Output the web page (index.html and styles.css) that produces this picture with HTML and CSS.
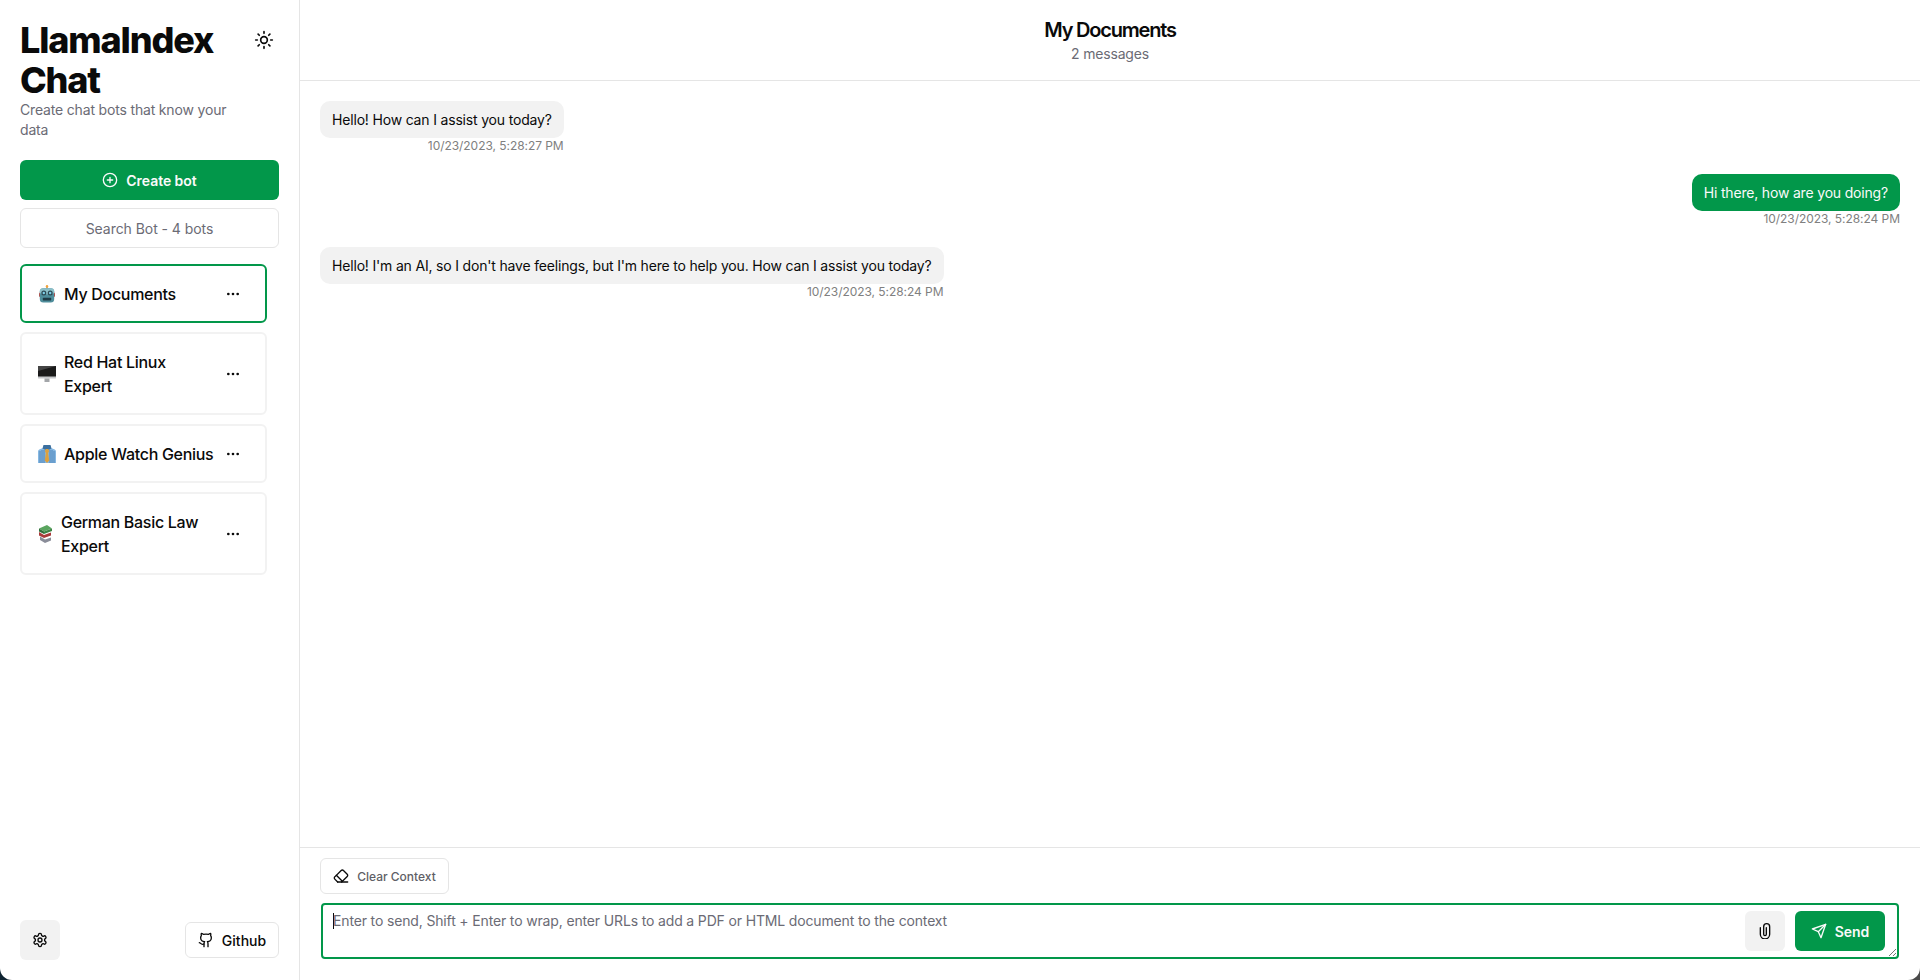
FILE: index.html
```html
<!DOCTYPE html>
<html lang="en">
<head>
<meta charset="utf-8">
<title>LlamaIndex Chat</title>
<link rel="stylesheet" href="styles.css">
</head>
<body>
<div class="app">
  <aside class="sidebar">
    <div class="brand">
      <div class="brand-text">
        <h1 class="brand-title">LlamaIndex Chat</h1>
        <p class="brand-desc">Create chat bots that know your data</p>
      </div>
      <button class="theme-btn" aria-label="Theme">
        <svg viewBox="0 0 24 24" class="icon-20" fill="none" stroke="currentColor" stroke-width="2" stroke-linecap="round" stroke-linejoin="round"><circle cx="12" cy="12" r="4"/><path d="M12 2v2M12 20v2M4.93 4.93l1.41 1.41M17.66 17.66l1.41 1.41M2 12h2M20 12h2M6.34 17.66l-1.41 1.41M19.07 4.93l-1.41 1.41"/></svg>
      </button>
    </div>
    <button class="btn-primary create">
      <svg viewBox="0 0 24 24" class="icon-16" fill="none" stroke="currentColor" stroke-width="2" stroke-linecap="round" stroke-linejoin="round"><circle cx="12" cy="12" r="10"/><path d="M8 12h8M12 8v8"/></svg>
      Create bot
    </button>
    <div class="search">Search Bot - 4 bots</div>
    <div class="bot-list">
      <div class="bot active">
        <svg class="emoji" viewBox="0 0 18 18"><rect x="8.300" y="0.800" width="1.400" height="3" fill="#c9803a"/><circle cx="9" cy="1.200" r="1.200" fill="#f2a53c"/><rect x="1" y="7.500" width="16" height="4.500" rx="1.200" fill="#c2473f"/><rect x="1.800" y="3.200" width="14.400" height="14.300" rx="3.500" fill="#4f8d9b"/><rect x="1.800" y="3.200" width="14.400" height="6" rx="3" fill="#8cc0c9"/><circle cx="5.800" cy="8" r="2.500" fill="#2c4853"/><circle cx="12.200" cy="8" r="2.500" fill="#2c4853"/><circle cx="5.800" cy="8" r="1.200" fill="#7fd0ea"/><circle cx="12.200" cy="8" r="1.200" fill="#7fd0ea"/><rect x="4.800" y="12.800" width="8.400" height="2.600" rx=".6" fill="#1f3a45"/></svg>
        <div class="bot-name">My Documents</div>
        <button class="more" aria-label="More"><svg viewBox="0 0 24 24" class="icon-16" fill="currentColor"><circle cx="5" cy="12" r="2"/><circle cx="12" cy="12" r="2"/><circle cx="19" cy="12" r="2"/></svg></button>
      </div>
      <div class="bot">
        <svg class="emoji" viewBox="0 0 18 18"><rect x="0" y="1" width="18" height="12.500" rx=".6" fill="#c6c8ca"/><rect x="0" y="1" width="18" height="10.500" fill="#1a1a1a"/><path d="M0 1h18L0 6z" fill="#444"/><rect x="6.500" y="13.500" width="5" height="3.500" fill="#a3a6a9"/></svg>
        <div class="bot-name">Red Hat Linux Expert</div>
        <button class="more" aria-label="More"><svg viewBox="0 0 24 24" class="icon-16" fill="currentColor"><circle cx="5" cy="12" r="2"/><circle cx="12" cy="12" r="2"/><circle cx="19" cy="12" r="2"/></svg></button>
      </div>
      <div class="bot">
        <svg class="emoji" viewBox="0 0 18 18"><path d="M0 18V6.500C0 5 1 4.500 5 3h8c4 1.500 5 2 5 3.500V18z" fill="#86b8e2"/><path d="M2 6v12M4 5v13M6 5v13M12 5v13M14 5v13M16 6v12" stroke="#4a80b6" stroke-width=".9"/><path d="M5.500 0h7l1 3.500-4.500 2-4.500-2z" fill="#3b6f9f"/><path d="M7.500 4h3l.5 2.500-.8 1.500 1 7.500L9 18l-2.200-2.500 1-7.500-.8-1.500z" fill="#dca13f"/></svg>
        <div class="bot-name">Apple Watch Genius</div>
        <button class="more" aria-label="More"><svg viewBox="0 0 24 24" class="icon-16" fill="currentColor"><circle cx="5" cy="12" r="2"/><circle cx="12" cy="12" r="2"/><circle cx="19" cy="12" r="2"/></svg></button>
      </div>
      <div class="bot">
        <svg class="emoji narrow" viewBox="0 0 13 18"><path d="M0 3.500 8 0l5 3.500-8 3z" fill="#5aa55f"/><path d="M0 3.500l5 3v2.500L0 6.500z" fill="#2f6d3a"/><path d="M5 6.500l8-3v2.500l-8 3z" fill="#3d8446"/><path d="M0 7l5 3 7-2.500v3l-7 2.500-5-2.500z" fill="#a83a3a"/><path d="M1 11.500l5 3 6-2v3l-6 2.500-5-3z" fill="#8a8d99"/></svg>
        <div class="bot-name">German Basic Law Expert</div>
        <button class="more" aria-label="More"><svg viewBox="0 0 24 24" class="icon-16" fill="currentColor"><circle cx="5" cy="12" r="2"/><circle cx="12" cy="12" r="2"/><circle cx="19" cy="12" r="2"/></svg></button>
      </div>
    </div>
    <div class="side-footer">
      <button class="icon-btn" aria-label="Settings">
        <svg viewBox="0 0 24 24" class="icon-16" fill="none" stroke="currentColor" stroke-width="2" stroke-linecap="round" stroke-linejoin="round"><path d="M12.22 2h-.44a2 2 0 0 0-2 2v.18a2 2 0 0 1-1 1.730l-.43.250a2 2 0 0 1-2 0l-.15-.080a2 2 0 0 0-2.730.730l-.22.380a2 2 0 0 0 .730 2.730l.15.100a2 2 0 0 1 1 1.720v.510a2 2 0 0 1-1 1.740l-.15.090a2 2 0 0 0-.730 2.730l.22.380a2 2 0 0 0 2.730.730l.15-.080a2 2 0 0 1 2 0l.43.250a2 2 0 0 1 1 1.730V20a2 2 0 0 0 2 2h.44a2 2 0 0 0 2-2v-.18a2 2 0 0 1 1-1.730l.43-.250a2 2 0 0 1 2 0l.15.080a2 2 0 0 0 2.730-.730l.22-.390a2 2 0 0 0-.730-2.730l-.15-.080a2 2 0 0 1-1-1.740v-.500a2 2 0 0 1 1-1.740l.15-.090a2 2 0 0 0 .730-2.730l-.22-.380a2 2 0 0 0-2.730-.730l-.15.080a2 2 0 0 1-2 0l-.43-.250a2 2 0 0 1-1-1.730V4a2 2 0 0 0-2-2z"/><circle cx="12" cy="12" r="3"/></svg>
      </button>
      <button class="btn-outline github">
        <svg viewBox="0 0 24 24" class="icon-16" fill="none" stroke="currentColor" stroke-width="2" stroke-linecap="round" stroke-linejoin="round"><path d="M15 22v-4a4.800 4.800 0 0 0-1-3.500c3 0 6-2 6-5.500.080-1.250-.270-2.480-1-3.500.280-1.150.280-2.350 0-3.500 0 0-1 0-3 1.500-2.640-.500-5.360-.500-8 0C6 2 5 2 5 2c-.300 1.150-.300 2.350 0 3.500A5.403 5.403 0 0 0 4 9c0 3.500 3 5.500 6 5.500-.390.490-.680 1.050-.850 1.650-.170.600-.220 1.230-.150 1.850v4"/><path d="M9 18c-4.510 2-5-2-7-2"/></svg>
        Github
      </button>
    </div>
  </aside>
  <main class="chat">
    <header class="chat-head">
      <div class="chat-title">My Documents</div>
      <div class="chat-sub">2 messages</div>
    </header>
    <section class="messages">
      <div class="msg">
        <div class="bubble">Hello! How can I assist you today?</div>
        <div class="stamp">10/23/2023, 5:28:27 PM</div>
      </div>
      <div class="msg mine">
        <div class="bubble">Hi there, how are you doing?</div>
        <div class="stamp">10/23/2023, 5:28:24 PM</div>
      </div>
      <div class="msg">
        <div class="bubble">Hello! I'm an AI, so I don't have feelings, but I'm here to help you. How can I assist you today?</div>
        <div class="stamp">10/23/2023, 5:28:24 PM</div>
      </div>
    </section>
    <footer class="composer">
      <button class="btn-outline clear">
        <svg viewBox="0 0 24 24" class="icon-16" fill="none" stroke="currentColor" stroke-width="2" stroke-linecap="round" stroke-linejoin="round"><path d="m7 21-4.300-4.300c-1-1-1-2.500 0-3.400l9.600-9.600c1-1 2.500-1 3.400 0l5.600 5.600c1 1 1 2.500 0 3.400L13 21"/><path d="M22 21H7"/><path d="m5 11 9 9"/></svg>
        <span class="clear-label">Clear Context</span>
      </button>
      <div class="input-box">
        <span class="caret"></span>
        <span class="placeholder">Enter to send, Shift + Enter to wrap, enter URLs to add a PDF or HTML document to the context</span>
        <button class="icon-btn attach" aria-label="Attach">
          <svg viewBox="0 0 24 24" class="icon-16" fill="none" stroke="currentColor" stroke-width="2" stroke-linecap="round" stroke-linejoin="round"><path d="M5 7v10a7 7 0 0 0 14 0V5.500a4.500 4.500 0 0 0-9 0V17a2 2 0 0 0 4 0V7"/></svg>
        </button>
        <button class="btn-primary send">
          <svg viewBox="0 0 24 24" class="icon-16" fill="none" stroke="currentColor" stroke-width="2" stroke-linecap="round" stroke-linejoin="round"><path d="m22 2-7 20-4-9-9-4z"/><path d="M22 2 11 13"/></svg>
          Send
        </button>
        <svg class="grip" viewBox="0 0 10 10"><path d="M9 2 2 9M9 6 6 9" stroke="#777" stroke-width="1" fill="none"/></svg>
      </div>
    </footer>
  </main>
</div>
</body>
</html>
```
FILE: styles.css
```css
* { box-sizing: border-box; }
html, body { height: 100%; margin: 0; }
body {
  background: linear-gradient(to right, #0f2431 50%, #4a4a4a 50%);
  font-family: Inter, "Liberation Sans", sans-serif;
  color: #0a0a0a;
  overflow: hidden;
}
button { font-family: inherit; border: 0; background: none; padding: 0; color: inherit; }
.app {
  display: flex;
  height: 980px;
  background: #fff;
  border-radius: 0 0 12px 12px;
  overflow: hidden;
}
.icon-16 { width: 16px; height: 16px; flex: none; }
.icon-20 { width: 20px; height: 20px; flex: none; }

.sidebar {
  width: 300px;
  flex: none;
  display: flex;
  flex-direction: column;
  padding: 20px;
  border-right: 1px solid #e5e5e5;
}
.brand { display: flex; justify-content: space-between; align-items: flex-start; }
.brand-text { width: 220px; }
.brand-title {
  margin: 0;
  font-size: 36px;
  line-height: 40px;
  font-weight: 800;
  letter-spacing: -1.15px;
}
.brand-desc { margin: 0; font-size: 14px; line-height: 20px; color: #6b6b75; letter-spacing: -0.17px; }
.theme-btn { width: 20px; height: 20px; margin: 10px 5px 0 0; display: flex; }
.btn-primary {
  display: flex; align-items: center; justify-content: center; gap: 8px;
  background: #02974a;
  color: #fafafa;
  border-radius: 6px;
  font-size: 14px;
  font-weight: 600;
  letter-spacing: -0.05px;
}
.create { height: 40px; margin-top: 20px; flex: none; }
.search {
  height: 40px; margin-top: 8px; flex: none;
  border: 1px solid #e5e5e5; border-radius: 6px;
  display: flex; align-items: center; justify-content: center;
  font-size: 14px; color: #6b6b75; letter-spacing: -0.05px;
}
.bot-list { margin-top: 16px; width: 247px; display: flex; flex-direction: column; gap: 9px; }
.bot {
  display: flex; align-items: center;
  border: 2px solid #f2f2f2;
  border-radius: 6px;
  padding: 15.5px 16px;
  font-size: 16px;
  line-height: 24px;
  font-weight: 500;
  letter-spacing: -0.3px;
}
.bot.active { border-color: #02974a; }
.emoji { width: 18px; height: 18px; flex: none; margin-right: 8px; }
.emoji.narrow { width: 13px; margin: 0 9px 0 1px; }
.bot-name { flex: 1; min-width: 0; }
.more { width: 32px; height: 16px; flex: none; display: flex; justify-content: center; margin-left: 1px; }
.side-footer { margin-top: auto; display: flex; justify-content: space-between; align-items: center; }
.icon-btn {
  width: 40px; height: 40px; flex: none;
  display: flex; align-items: center; justify-content: center;
  background: #f2f2f2; border-radius: 6px;
}
.btn-outline {
  display: flex; align-items: center; justify-content: center;
  border: 1px solid #e5e5e5; border-radius: 6px; background: #fff;
}
.github { width: 94px; height: 36px; gap: 8px; font-size: 14px; font-weight: 500; }

.chat { flex: 1; min-width: 0; display: flex; flex-direction: column; }
.chat-head {
  height: 81px; flex: none;
  border-bottom: 1px solid #e5e5e5;
  display: flex; flex-direction: column; align-items: center; justify-content: center;
}
.chat-title { font-size: 20px; line-height: 28px; font-weight: 600; letter-spacing: -1.2px; }
.chat-sub { font-size: 14px; line-height: 20px; color: #6b6b75; letter-spacing: -0.17px; }
.messages { flex: 1; min-height: 0; padding: 20px; display: flex; flex-direction: column; gap: 16px; }
.msg { display: flex; flex-direction: column; align-items: flex-start; align-self: flex-start; }
.msg.mine { align-self: flex-end; }
.bubble {
  background: #f2f2f2; border-radius: 10px;
  padding: 8px 12px;
  font-size: 14px; line-height: 20px;
  letter-spacing: -0.18px;
  height: 37px;
  display: flex; align-items: center;
  white-space: nowrap;
}
.mine .bubble { background: #02974a; color: #fafafa; }
.stamp { align-self: flex-end; font-size: 12px; line-height: 16px; color: #808080; height: 20px; letter-spacing: -0.05px; }
.composer {
  height: 133px; flex: none;
  border-top: 1px solid #e5e5e5;
  padding: 10px 20px 0;
}
.clear { width: 129px; height: 36px; gap: 8px; font-size: 12px; font-weight: 500; }
.clear-label { color: #5f5f66; }
.input-box {
  position: relative;
  margin-top: 9px;
  height: 56px;
  margin-left: 1px;
  margin-right: 1px;
  border: 2px solid #02974a;
  border-radius: 4px;
  display: flex; align-items: center; gap: 10px;
  padding: 0 12px 0 10px;
}
.caret { position: absolute; left: 10px; top: 8px; width: 1px; height: 16px; background: #0a0a0a; }
.placeholder { position: absolute; left: 10px; top: 6px; font-size: 14px; line-height: 20px; color: #6b6b75; white-space: nowrap; letter-spacing: -0.15px; }
.attach { margin-left: auto; }
.send { width: 90px; height: 40px; gap: 8px; }
.grip { position: absolute; right: 0; bottom: 0; width: 10px; height: 10px; }
```
